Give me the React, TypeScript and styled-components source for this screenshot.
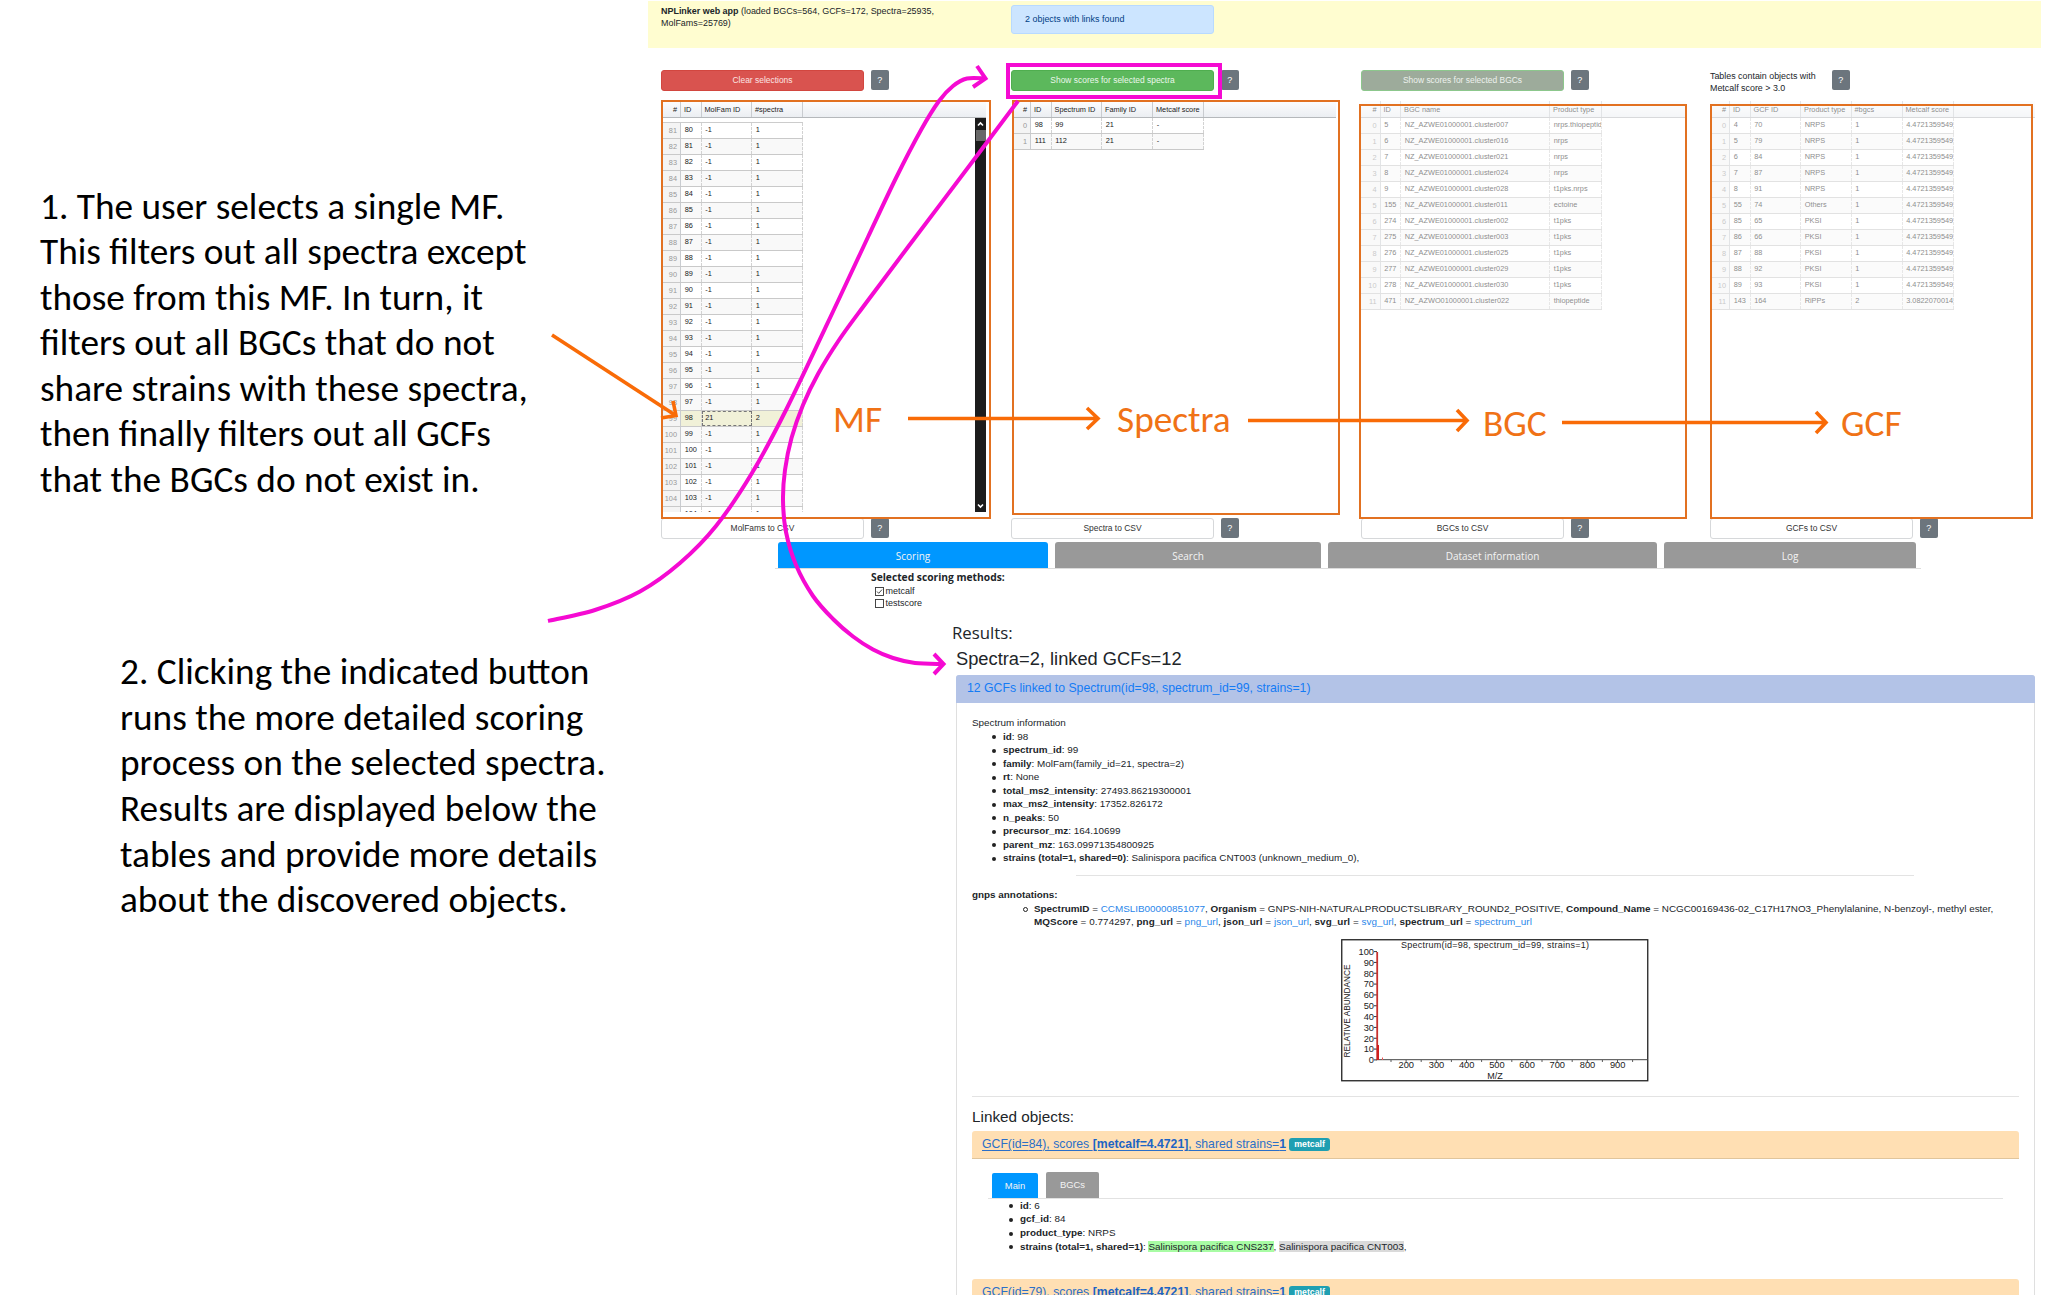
import React from "react";
import styled, { createGlobalStyle, css } from "styled-components";

const ARIAL = '"Liberation Sans", Arial, sans-serif';
const SEGOE = '"Open Sans", "Noto Sans", sans-serif';
const HUMANIST = 'Carlito, Calibri, "Noto Sans", sans-serif';
const ORANGE = "#f96b07";
const MAGENTA = "#f50ad2";

const GlobalStyle = createGlobalStyle`
  * { box-sizing: border-box; }
  body { margin: 0; background: #fff; }
`;

const Page = styled.main`
  position: relative;
  display: grid;
  grid-template-columns: 648px 1fr;
  width: 2058px;
  height: 1295px;
  overflow: hidden;
  color: #212529;
  font-family: ${ARIAL};
`;

/* ---------- explanatory notes ---------- */

const Notes = styled.aside`
  display: flex;
  flex-direction: column;
  gap: 147px;
  padding-top: 183.5px;
`;

const Note = styled.p<{ $indent: number }>`
  margin: 0 0 0 ${(p) => p.$indent}px;
  color: #000;
  font: 400 37.3px/45.55px ${HUMANIST};
  white-space: nowrap;
`;

const NoteLine = styled.span`
  display: block;
`;

/* ---------- application shell ---------- */

const AppPane = styled.section`
  display: flex;
  flex-direction: column;
  padding-top: 1px;
`;

const Columns = styled.div<{ $top?: number; $height: number }>`
  display: grid;
  grid-template-columns: 350px 350px 349px 348px;
  height: ${(p) => p.$height}px;
  margin-top: ${(p) => p.$top ?? 0}px;
  padding-left: 13px;
`;

const Banner = styled(Columns)`
  width: 1393px;
  background: #fffdd0;
`;

const BannerText = styled.p`
  margin: 0;
  padding-top: 3.5px;
  font-size: 8.95px;
  line-height: 12px;
`;

const Alert = styled.div`
  width: 203px;
  height: 29px;
  margin-top: 4px;
  padding-left: 13px;
  border: 1px solid #b8daff;
  border-radius: 3px;
  background: #cce5ff;
  color: #004085;
  font-size: 8.95px;
  line-height: 27px;
`;

const ControlRow = styled.div`
  display: flex;
  align-items: flex-start;
  gap: 7px;
`;

const buttonTone = {
  danger: css`background: #d9534f; border-color: #d2463f; color: #fbe3e2;`,
  success: css`background: #5cb85c; border-color: #4fae4f; color: #eaf7ea;`,
  disabled: css`background: #9dab9b; border-color: #8cc78c; color: #edf1ed;`,
  plain: css`background: #fff; border-color: #d6d8da; color: #333;`,
};

const Button = styled.button<{ $tone: keyof typeof buttonTone }>`
  width: 203px;
  height: 21px;
  padding: 0;
  border: 1px solid;
  border-radius: 3px;
  font: 400 8.45px/19px ${ARIAL};
  ${(p) => buttonTone[p.$tone]}
`;

const Help = styled.button`
  width: 17.5px;
  height: 20px;
  padding: 0;
  border: 0;
  border-radius: 2px;
  background: #6c757d;
  color: #fff;
  font: 400 9px/20px ${ARIAL};
`;

const Threshold = styled.p`
  width: 115px;
  margin: 0;
  font-size: 8.9px;
  line-height: 12px;
`;

/* ---------- data tables ---------- */

const TableBox = styled.div<{ $width: number; $height: number; $dim?: boolean; $shift?: number }>`
  display: grid;
  grid-template-columns: 1fr auto;
  grid-template-rows: 17px 1fr;
  width: ${(p) => p.$width}px;
  height: ${(p) => p.$height}px;
  margin-left: ${(p) => p.$shift ?? 0}px;
  overflow: hidden;
  font-size: 7.35px;
  opacity: ${(p) => (p.$dim ? 0.52 : 1)};
`;

const HeadRow = styled.div`
  grid-column: 1 / -1;
  display: flex;
  border-bottom: 1px solid #b5b8bb;
  background: linear-gradient(#fdfdfe, #ebeef2);
`;

const HeadCell = styled.div<{ $w: number; $right?: boolean }>`
  flex: none;
  width: ${(p) => p.$w}px;
  padding: 0 3px;
  border-right: 1px solid #c9ccd0;
  line-height: 17px;
  text-align: ${(p) => (p.$right ? "right" : "left")};
  white-space: nowrap;
  color: #222;
`;

const Body = styled.div`
  overflow: hidden;
`;

const LeadRow = styled.div<{ $h: number; $w: number }>`
  width: ${(p) => p.$w}px;
  height: ${(p) => p.$h}px;
  border-bottom: 1px solid #cccccc;
`;

const Row = styled.div<{ $odd?: boolean; $selected?: boolean }>`
  display: flex;
  width: max-content;
  height: 16px;
  border-bottom: 1px solid #c9c9c9;
  background: ${(p) => (p.$selected ? "#f1f1d8" : p.$odd ? "#f9f9f9" : "#fff")};
`;

const Cell = styled.div<{ $w: number; $picked?: boolean }>`
  flex: none;
  width: ${(p) => p.$w}px;
  padding-left: 3.7px;
  overflow: hidden;
  border-right: 1px dashed #d2d2d2;
  line-height: 13.5px;
  white-space: nowrap;
  color: #222;
  ${(p) => p.$picked && "outline: 1px dashed #777; outline-offset: -1px;"}
`;

const IndexCell = styled(Cell)`
  padding: 0 3px 0 0;
  border-right: 1px solid #c9ccd0;
  background: #f4f4f4;
  color: #999;
  line-height: 16px;
  text-align: right;
`;

const Scrollbar = styled.div`
  display: flex;
  flex-direction: column;
  align-items: center;
  width: 11px;
  background: #1c1c1c;
`;

const Thumb = styled.i`
  width: 10px;
  height: 11px;
  background: #686868;
`;

const ScrollArrow = styled.svg<{ $end?: boolean }>`
  width: 11px;
  height: 12px;
  margin-top: ${(p) => (p.$end ? "auto" : 0)};
`;

type TableProps = {
  heads: string[];
  widths: number[];
  rows: (string | number)[][];
  first?: number;
  width: number;
  height: number;
  dim?: boolean;
  shift?: number;
  lead?: number;
  selected?: number;
  scroll?: boolean;
};

function DataTable(p: TableProps) {
  const first = p.first ?? 0;
  return (
    <TableBox $width={p.width} $height={p.height} $dim={p.dim} $shift={p.shift}>
      <HeadRow>
        {p.heads.map((h, i) => (
          <HeadCell key={h} $w={p.widths[i]} $right={i === 0}>{h}</HeadCell>
        ))}
      </HeadRow>
      <Body>
        {p.lead ? <LeadRow $h={p.lead} $w={p.widths.reduce((a, b) => a + b, 0)} /> : null}
        {p.rows.map((r, i) => (
          <Row key={i} $odd={i % 2 === 1} $selected={p.selected === i}>
            <IndexCell $w={p.widths[0]}>{first + i}</IndexCell>
            {r.map((c, j) => (
              <Cell key={j} $w={p.widths[j + 1]} $picked={p.selected === i && j === 1}>{c}</Cell>
            ))}
          </Row>
        ))}
      </Body>
      {p.scroll && (
        <Scrollbar>
          <ScrollArrow viewBox="0 0 11 12"><path d="M3 7.5 5.5 5 8 7.5" fill="none" stroke="#fff" strokeWidth="1.6" /></ScrollArrow>
          <Thumb />
          <ScrollArrow $end viewBox="0 0 11 12"><path d="M3 4.5 5.5 7 8 4.5" fill="none" stroke="#fff" strokeWidth="1.6" /></ScrollArrow>
        </Scrollbar>
      )}
    </TableBox>
  );
}

const molFams = Array.from({ length: 25 }, (_, i) => (i === 18 ? [98, 21, 2] : [80 + i, -1, 1]));

const spectra = [
  [98, 99, 21, "-"],
  [111, 112, 21, "-"],
];

const bgcs = [
  [5, "NZ_AZWE01000001.cluster007", "nrps.thiopeptide"],
  [6, "NZ_AZWE01000001.cluster016", "nrps"],
  [7, "NZ_AZWE01000001.cluster021", "nrps"],
  [8, "NZ_AZWE01000001.cluster024", "nrps"],
  [9, "NZ_AZWE01000001.cluster028", "t1pks.nrps"],
  [155, "NZ_AZWE01000001.cluster011", "ectoine"],
  [274, "NZ_AZWE01000001.cluster002", "t1pks"],
  [275, "NZ_AZWE01000001.cluster003", "t1pks"],
  [276, "NZ_AZWE01000001.cluster025", "t1pks"],
  [277, "NZ_AZWE01000001.cluster029", "t1pks"],
  [278, "NZ_AZWE01000001.cluster030", "t1pks"],
  [471, "NZ_AZWO01000001.cluster022", "thiopeptide"],
];

const S = "4.4721359549";
const gcfs = [
  [4, 70, "NRPS", 1, S],
  [5, 79, "NRPS", 1, S],
  [6, 84, "NRPS", 1, S],
  [7, 87, "NRPS", 1, S],
  [8, 91, "NRPS", 1, S],
  [55, 74, "Others", 1, S],
  [85, 65, "PKSI", 1, S],
  [86, 66, "PKSI", 1, S],
  [87, 88, "PKSI", 1, S],
  [88, 92, "PKSI", 1, S],
  [89, 93, "PKSI", 1, S],
  [143, 164, "RiPPs", 2, "3.0822070014"],
];

/* ---------- tabs and scoring ---------- */

const Tabs = styled.nav`
  display: flex;
  width: 1146px;
  height: 27px;
  margin: 3px 0 0 127px;
  padding-left: 3px;
  gap: 7px;
  border-bottom: 1px solid #dcdcdc;
`;

const Tab = styled.div<{ $w: number; $active?: boolean }>`
  flex: none;
  width: ${(p) => p.$w}px;
  height: 26px;
  border-radius: 3px 3px 0 0;
  background: ${(p) => (p.$active ? "#0097ff" : "#999")};
  color: #f4f4f4;
  font: 400 10px/28px ${SEGOE};
  text-align: center;
`;

const Scoring = styled.div`
  display: flex;
  flex-direction: column;
  height: 53.5px;
  padding: 1px 0 0 223px;
`;

const ScoringTitle = styled.strong`
  font: 700 10.25px/15px ${SEGOE};
`;

const Check = styled.label`
  display: flex;
  align-items: center;
  gap: 1.5px;
  height: 12px;
  padding-left: 4px;
  font-size: 9px;
`;

const CheckBox = styled.svg`
  flex: none;
  width: 9px;
  height: 9px;
  overflow: visible;
  fill: #fff;
  stroke: #333;
`;

/* ---------- results ---------- */

const Results = styled.div`
  padding-left: 305px;
`;

const ResultsTitle = styled.h2`
  margin: 0 0 0 -1px;
  font: 400 16.8px/20px ${SEGOE};
`;

const ResultsCount = styled.h3`
  margin: 5.5px 0 5px 3px;
  font: 400 18.3px/22px ${ARIAL};
`;

const Card = styled.article`
  width: 1079px;
  height: 700px;
  margin-left: 3px;
  border: 1px solid #dfdfdf;
  border-radius: 3px 3px 0 0;
`;

const CardHead = styled.header`
  height: 28px;
  margin: -1px -1px 0;
  padding-left: 11px;
  border-radius: 3px 3px 0 0;
  background: #b3c3e7;
  color: #137bf5;
  font-size: 12.25px;
  line-height: 26px;
`;

const CardBody = styled.div`
  padding: 13px 15px 0;
  font-size: 9.88px;
  line-height: 13.5px;
`;

const List = styled.ul<{ $indent: number; $line?: number }>`
  margin: 0;
  padding: 0 0 0 ${(p) => p.$indent}px;
  list-style: none;
  line-height: ${(p) => p.$line ?? 13.5}px;
`;

const Item = styled.li<{ $hollow?: boolean }>`
  display: flex;
  white-space: pre;
  &::before {
    content: "";
    flex: none;
    box-sizing: border-box;
    width: 4px;
    height: 4px;
    margin: 5.5px 7px 0 0;
    border: ${(p) => (p.$hollow ? "1px solid #222" : "0")};
    border-radius: 50%;
    background: ${(p) => (p.$hollow ? "transparent" : "#222")};
    ${(p) => p.$hollow && "width: 5px; height: 5px; margin: 5px 6px 0 0;"}
  }
`;

const LooseLine = styled.span`
  letter-spacing: 0.06px;
`;

const Rule = styled.hr<{ $margin: string }>`
  height: 1px;
  margin: ${(p) => p.$margin};
  border: 0;
  background: #e3e3e3;
`;

const Link = styled.a`
  color: #2a86ea;
`;

const Chart = styled.svg`
  display: block;
  width: 308px;
  height: 143px;
  margin: 10.5px 0 0 369px;
  font-family: ${ARIAL};
`;

const LinkedTitle = styled.h4`
  margin: 0 0 4px;
  font: 400 15.3px/20px ${ARIAL};
`;

const GcfHead = styled.header`
  display: flex;
  align-items: center;
  gap: 3px;
  height: 28px;
  padding: 1px 0 0 10px;
  border-bottom: 1px solid #e0c59c;
  border-radius: 3px 3px 0 0;
  background: #ffdfb3;
  font-size: 12.25px;
`;

const GcfLink = styled.a`
  color: #2b6fc8;
  text-decoration: underline;
  text-underline-offset: 2px;
  text-decoration-thickness: 1px;
  b { color: #1c64c4; }
`;

const Badge = styled.span`
  width: 41px;
  height: 13px;
  border-radius: 3px;
  background: #1f9fb2;
  color: #fff;
  font: 700 8.8px/13px ${ARIAL};
  text-align: center;
`;

const GcfPanel = styled.div`
  padding-bottom: 25px;
`;

const MiniTabs = styled.nav`
  display: flex;
  align-items: flex-end;
  gap: 8px;
  width: 1015px;
  height: 27px;
  margin: 13px 0 0 16px;
  padding-left: 4px;
  border-bottom: 1px solid #e2e2e2;
`;

const MiniTab = styled.div<{ $w: number; $active?: boolean }>`
  width: ${(p) => p.$w}px;
  height: ${(p) => (p.$active ? 25 : 26)}px;
  border-radius: 2px 2px 0 0;
  background: ${(p) => (p.$active ? "#0097ff" : "#999")};
  color: #f4f4f4;
  font-size: 9.4px;
  line-height: 26px;
  text-align: center;
`;

const Mark = styled.mark<{ $tone: string }>`
  height: 11px;
  margin-top: 1px;
  background: ${(p) => p.$tone};
  color: inherit;
  line-height: 12px;
`;

/* ---------- annotations drawn over the application ---------- */

const Frame = styled.div<{ $x: number; $y: number; $w: number; $h: number; $color?: string; $t?: number }>`
  position: absolute;
  left: ${(p) => p.$x}px;
  top: ${(p) => p.$y}px;
  width: ${(p) => p.$w}px;
  height: ${(p) => p.$h}px;
  border: ${(p) => p.$t ?? 2}px solid ${(p) => p.$color ?? "#e27121"};
`;

const Label = styled.span<{ $x: number; $y: number }>`
  position: absolute;
  left: ${(p) => p.$x}px;
  top: ${(p) => p.$y}px;
  color: #f07216;
  font: 400 37.3px/40px ${HUMANIST};
`;

const Arrows = styled.svg`
  position: absolute;
  inset: 0;
  width: 2058px;
  height: 1295px;
  fill: none;
  pointer-events: none;
`;

type Point = [number, number];

/* Smooth curve through every point (Catmull-Rom turned into cubic segments). */
function curve(points: Point[]) {
  let d = `M${points[0][0]} ${points[0][1]}`;
  for (let i = 0; i < points.length - 1; i++) {
    const a = points[i - 1] ?? points[i];
    const b = points[i];
    const c = points[i + 1];
    const e = points[i + 2] ?? c;
    d += `C${b[0] + (c[0] - a[0]) / 6} ${b[1] + (c[1] - a[1]) / 6} ${c[0] - (e[0] - b[0]) / 6} ${c[1] - (e[1] - b[1]) / 6} ${c[0]} ${c[1]}`;
  }
  return d;
}

const toButton: Point[] = [
  [548, 621], [595, 610], [640, 591.5], [680, 563], [716, 526], [752, 473], [787, 408],
  [838, 301], [868, 237], [896, 178], [921, 130], [939, 101], [953, 86], [967, 78.5], [985, 78.5],
];

const toResults: Point[] = [
  [1018, 101], [979, 153], [908, 247], [866, 303], [839, 340], [818, 374], [803, 405],
  [791.5, 438], [785, 470], [783, 500], [786, 532], [796, 565], [813, 596], [833, 619],
  [853, 636.5], [873, 649.5], [893, 658], [915, 663], [943, 664],
];

const spectrumFields = [
  ["id", "98"],
  ["spectrum_id", "99"],
  ["family", "MolFam(family_id=21, spectra=2)"],
  ["rt", "None"],
  ["total_ms2_intensity", "27493.86219300001"],
  ["max_ms2_intensity", "17352.826172"],
  ["n_peaks", "50"],
  ["precursor_mz", "164.10699"],
  ["parent_mz", "163.09971354800925"],
  ["strains (total=1, shared=0)", "Salinispora pacifica CNT003 (unknown_medium_0),"],
];

function SpectrumChart() {
  return (
    <Chart viewBox="0 0 308 143">
      <rect x="0.75" y="0.75" width="306" height="141" fill="#fff" stroke="#222" strokeWidth="1.3" />
      <text x="154" y="9.3" fontSize="9" textAnchor="middle" textLength="188" fill="#222">Spectrum(id=98, spectrum_id=99, strains=1)</text>
      {Array.from({ length: 11 }, (_, i) => (
        <g key={i}>
          <text x="33" y={124.3 - i * 10.83} fontSize="9.3" textAnchor="end" fill="#222">{i * 10}</text>
          <path d={`M33 ${120.9 - i * 10.83}h3`} stroke="#333" />
        </g>
      ))}
      {Array.from({ length: 8 }, (_, i) => (
        <text key={i} x={65.3 + i * 30.2} y="129" fontSize="9.3" textAnchor="middle" fill="#222">{200 + i * 100}</text>
      ))}
      <path d="M35 120.7H307" stroke="#444" />
      {Array.from({ length: 17 }, (_, i) => (
        <path key={i} d={`M${50 + i * 15.1} 121v2`} stroke="#333" strokeWidth="0.8" />
      ))}
      <path d="M36.2 13V121" stroke="#c8312f" strokeWidth="1.8" />
      <path d="M37 106V121" stroke="#d02020" strokeWidth="2" />
      <path d="M41.5 118.5V121" stroke="#e55" />
      <text x="154" y="140" fontSize="9" textAnchor="middle" fill="#222">M/Z</text>
      <text transform="translate(9.3 72) rotate(-90)" fontSize="9" textAnchor="middle" textLength="93" lengthAdjust="spacingAndGlyphs" fill="#222">RELATIVE ABUNDANCE</text>
    </Chart>
  );
}

function GcfHeader({ id }: { id: number }) {
  return (
    <GcfHead>
      <GcfLink>GCF(id={id}), scores <b>[metcalf=4.4721]</b>, shared strains=<b>1</b></GcfLink>
      <Badge>metcalf</Badge>
    </GcfHead>
  );
}

const noteOne = [
  "1. The user selects a single MF.",
  "This filters out all spectra except",
  "those from this MF. In turn, it",
  "filters out all BGCs that do not",
  "share strains with these spectra,",
  "then finally filters out all GCFs",
  "that the BGCs do not exist in.",
];

const noteTwo = [
  "2. Clicking the indicated button",
  "runs the more detailed scoring",
  "process on the selected spectra.",
  "Results are displayed below the",
  "tables and provide more details",
  "about the discovered objects.",
];

export default function App() {
  return (
    <>
      <GlobalStyle />
      <Page>
        <Notes>
          <Note $indent={40}>
            {noteOne.map((t) => <NoteLine key={t}>{t}</NoteLine>)}
          </Note>
          <Note $indent={120}>
            {noteTwo.map((t) => <NoteLine key={t}>{t}</NoteLine>)}
          </Note>
        </Notes>

        <AppPane>
          <Banner $height={47}>
            <BannerText><b>NPLinker web app</b> (loaded BGCs=564, GCFs=172, Spectra=25935,<br />MolFams=25769)</BannerText>
            <Alert>2 objects with links found</Alert>
          </Banner>

          <Columns $top={22} $height={31}>
            <ControlRow><Button $tone="danger">Clear selections</Button><Help>?</Help></ControlRow>
            <ControlRow><Button $tone="success">Show scores for selected spectra</Button><Help>?</Help></ControlRow>
            <ControlRow><Button $tone="disabled">Show scores for selected BGCs</Button><Help>?</Help></ControlRow>
            <ControlRow><Threshold>Tables contain objects with Metcalf score &gt; 3.0</Threshold><Help>?</Help></ControlRow>
          </Columns>

          <Columns $height={417}>
            <DataTable heads={["#", "ID", "MolFam ID", "#spectra"]} widths={[19, 20.5, 50.5, 51]} rows={molFams} first={81} width={324} height={411} shift={1} lead={5} selected={18} scroll />
            <DataTable heads={["#", "ID", "Spectrum ID", "Family ID", "Metcalf score"]} widths={[19, 20.5, 50.5, 51, 51]} rows={spectra} width={324} height={400} shift={1} />
            <DataTable heads={["#", "ID", "BGC name", "Product type"]} widths={[19.5, 20.5, 149, 51.5]} rows={bgcs} width={325} height={400} dim />
            <DataTable heads={["#", "ID", "GCF ID", "Product type", "#bgcs", "Metcalf score"]} widths={[20, 20.5, 50.5, 50.5, 51, 51.5]} rows={gcfs} width={325} height={400} dim />
          </Columns>

          <Columns $height={21}>
            <ControlRow><Button $tone="plain">MolFams to CSV</Button><Help>?</Help></ControlRow>
            <ControlRow><Button $tone="plain">Spectra to CSV</Button><Help>?</Help></ControlRow>
            <ControlRow><Button $tone="plain">BGCs to CSV</Button><Help>?</Help></ControlRow>
            <ControlRow><Button $tone="plain">GCFs to CSV</Button><Help>?</Help></ControlRow>
          </Columns>

          <Tabs>
            <Tab $w={270} $active>Scoring</Tab>
            <Tab $w={266}>Search</Tab>
            <Tab $w={329}>Dataset information</Tab>
            <Tab $w={252}>Log</Tab>
          </Tabs>

          <Scoring>
            <ScoringTitle>Selected scoring methods:</ScoringTitle>
            <Check>
              <CheckBox viewBox="0 0 9 9"><rect x="0.5" y="0.5" width="8" height="8" strokeWidth="0.9" /><path d="M2 4.5 3.7 6.300 7 2.6" fill="none" strokeWidth="0.9" /></CheckBox>
              metcalf
            </Check>
            <Check>
              <CheckBox viewBox="0 0 9 9"><rect x="0.5" y="0.5" width="8" height="8" strokeWidth="0.9" /></CheckBox>
              testscore
            </Check>
          </Scoring>

          <Results>
            <ResultsTitle>Results:</ResultsTitle>
            <ResultsCount>Spectra=2, linked GCFs=12</ResultsCount>
            <Card>
              <CardHead>12 GCFs linked to Spectrum(id=98, spectrum_id=99, strains=1)</CardHead>
              <CardBody>
                Spectrum information
                <List $indent={20}>
                  {spectrumFields.map(([k, v]) => <Item key={k}><b>{k}</b>: {v}</Item>)}
                </List>
                <Rule $margin="10.5px 105px 12px 104px" />
                <b>gnps annotations:</b>
                <List $indent={51}>
                  <Item $hollow>
                    <span>
                      <b>SpectrumID</b> = <Link>CCMSLIB00000851077</Link>, <b>Organism</b> = GNPS-NIH-NATURALPRODUCTSLIBRARY_ROUND2_POSITIVE, <b>Compound_Name</b> = NCGC00169436-02_C17H17NO3_Phenylalanine, N-benzoyl-, methyl ester,<br />
                      <LooseLine><b>MQScore</b> = 0.774297, <b>png_url</b> = <Link>png_url</Link>, <b>json_url</b> = <Link>json_url</Link>, <b>svg_url</b> = <Link>svg_url</Link>, <b>spectrum_url</b> = <Link>spectrum_url</Link></LooseLine>
                    </span>
                  </Item>
                </List>
                <SpectrumChart />
                <Rule $margin="13.5px 0 10px" />
                <LinkedTitle>Linked objects:</LinkedTitle>
                <GcfHeader id={84} />
                <GcfPanel>
                  <MiniTabs>
                    <MiniTab $w={46} $active>Main</MiniTab>
                    <MiniTab $w={53}>BGCs</MiniTab>
                  </MiniTabs>
                  <List $indent={37} $line={13.8}>
                    <Item><b>id</b>: 6</Item>
                    <Item><b>gcf_id</b>: 84</Item>
                    <Item><b>product_type</b>: NRPS</Item>
                    <Item><b>strains (total=1, shared=1)</b>: <Mark $tone="#a8fca4">Salinispora pacifica CNS237</Mark>, <Mark $tone="#dadada">Salinispora pacifica CNT003</Mark>,</Item>
                  </List>
                </GcfPanel>
                <GcfHeader id={79} />
              </CardBody>
            </Card>
          </Results>
        </AppPane>

        <Frame $x={661} $y={100} $w={330} $h={419} />
        <Frame $x={1012} $y={100} $w={328} $h={415} />
        <Frame $x={1359} $y={104} $w={328} $h={415} />
        <Frame $x={1710} $y={104} $w={323} $h={415} />
        <Frame $x={1006} $y={63} $w={216} $h={36} $t={4} $color={MAGENTA} />

        <Label $x={833} $y={399}>MF</Label>
        <Label $x={1117} $y={399}>Spectra</Label>
        <Label $x={1483} $y={402.5}>BGC</Label>
        <Label $x={1841} $y={402.5}>GCF</Label>

        <Arrows viewBox="0 0 2058 1295">
          <g stroke={ORANGE} strokeWidth="3.6">
            <path d="M552 335 L675 415" />
            <path d="M673 401 L676 415.500 L661 418" />
            <path d="M908 418.500H1098M1087 408 1098 418.500 1087 429" />
            <path d="M1248 420.500H1467M1457 410 1467 420.500 1457 431" />
            <path d="M1562 422.500H1826M1816 412 1826 422.500 1816 433" />
          </g>
          <g stroke={MAGENTA} strokeWidth="4">
            <path d={curve(toButton)} />
            <path d="M977 66 985.500 78.500 973 87" />
            <path d={curve(toResults)} />
            <path d="M934 654 943.500 664 934 674" />
          </g>
        </Arrows>
      </Page>
    </>
  );
}
